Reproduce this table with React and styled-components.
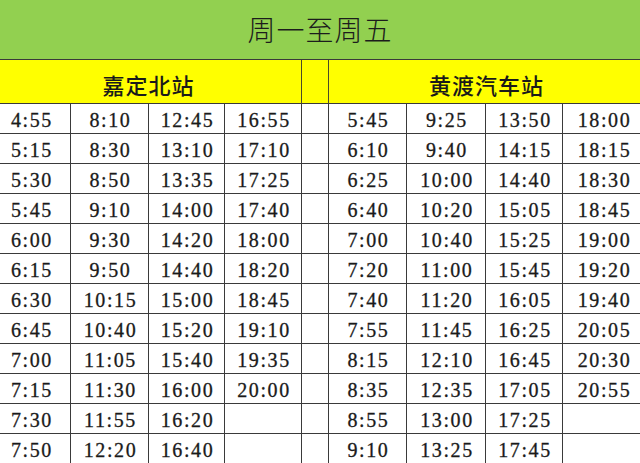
import React from 'react';
import styled, { createGlobalStyle } from 'styled-components';

const GlobalStyle = createGlobalStyle`
  html, body {
    margin: 0;
    padding: 0;
    background: #ffffff;
  }
  * {
    box-sizing: border-box;
  }
`;

const Page = styled.div`
  width: 640px;
  height: 463px;
  overflow: hidden;
  background: #ffffff;
`;

const TitleBar = styled.div`
  height: 60px;
  background: #92d050;
  border-bottom: 1px solid #3a3a3a;
  display: flex;
  align-items: center;
  justify-content: center;
  padding-bottom: 2px;
  font-family: "Noto Sans CJK SC", sans-serif;
  font-weight: 300;
  font-size: 28px;
  letter-spacing: 1px;
  color: #1c1c1c;
`;

const Grid = styled.div`
  margin-left: -8px;
  display: grid;
  grid-template-columns: 79px 78px 76px 77px 27px 78px 79px 77px 82px;
  grid-auto-rows: 30px;
  grid-template-rows: 44px;
`;

const StationCell = styled.div`
  grid-column: ${p => p.span};
  background: #ffff00;
  border-right: 1px solid #4a4a2a;
  border-bottom: 1px solid #3a3a3a;
  display: flex;
  align-items: center;
  justify-content: center;
  padding-top: 4px;
  padding-left: ${p => p.shift || 0}px;
  font-family: "Noto Sans CJK SC", sans-serif;
  font-weight: 500;
  font-size: 22px;
  letter-spacing: 1px;
  color: #1a1a1a;
`;

const GapHead = styled.div`
  background: #ffff00;
  border-right: 1px solid #4a4a2a;
  border-bottom: 1px solid #3a3a3a;
`;

const Cell = styled.div`
  border-right: 1px solid #3a3a3a;
  border-bottom: 1px solid #3a3a3a;
  display: flex;
  align-items: center;
  justify-content: center;
  padding-top: 3px;
  padding-left: 2px;
  font-family: 'Liberation Serif', 'DejaVu Serif', serif;
  font-size: 20px;
  letter-spacing: 1.6px;
  color: #1a1a1a;
  -webkit-text-stroke: 0.3px #1a1a1a;
`;

const left = [
  ['4:55', '8:10', '12:45', '16:55'],
  ['5:15', '8:30', '13:10', '17:10'],
  ['5:30', '8:50', '13:35', '17:25'],
  ['5:45', '9:10', '14:00', '17:40'],
  ['6:00', '9:30', '14:20', '18:00'],
  ['6:15', '9:50', '14:40', '18:20'],
  ['6:30', '10:15', '15:00', '18:45'],
  ['6:45', '10:40', '15:20', '19:10'],
  ['7:00', '11:05', '15:40', '19:35'],
  ['7:15', '11:30', '16:00', '20:00'],
  ['7:30', '11:55', '16:20', ''],
  ['7:50', '12:20', '16:40', ''],
];

const right = [
  ['5:45', '9:25', '13:50', '18:00'],
  ['6:10', '9:40', '14:15', '18:15'],
  ['6:25', '10:00', '14:40', '18:30'],
  ['6:40', '10:20', '15:05', '18:45'],
  ['7:00', '10:40', '15:25', '19:00'],
  ['7:20', '11:00', '15:45', '19:20'],
  ['7:40', '11:20', '16:05', '19:40'],
  ['7:55', '11:45', '16:25', '20:05'],
  ['8:15', '12:10', '16:45', '20:30'],
  ['8:35', '12:35', '17:05', '20:55'],
  ['8:55', '13:00', '17:25', ''],
  ['9:10', '13:25', '17:45', ''],
];

export default function App() {
  return (
    <Page>
      <GlobalStyle />
      <TitleBar>周一至周五</TitleBar>
      <Grid>
        <StationCell span="1 / 5" shift={4}>嘉定北站</StationCell>
        <GapHead />
        <StationCell span="6 / 10" shift={-4}>黄渡汽车站</StationCell>
        {left.map((row, i) => (
          <React.Fragment key={i}>
            {row.map((t, j) => (
              <Cell key={'l' + j}>{t}</Cell>
            ))}
            <Cell />
            {right[i].map((t, j) => (
              <Cell key={'r' + j}>{t}</Cell>
            ))}
          </React.Fragment>
        ))}
      </Grid>
    </Page>
  );
}
